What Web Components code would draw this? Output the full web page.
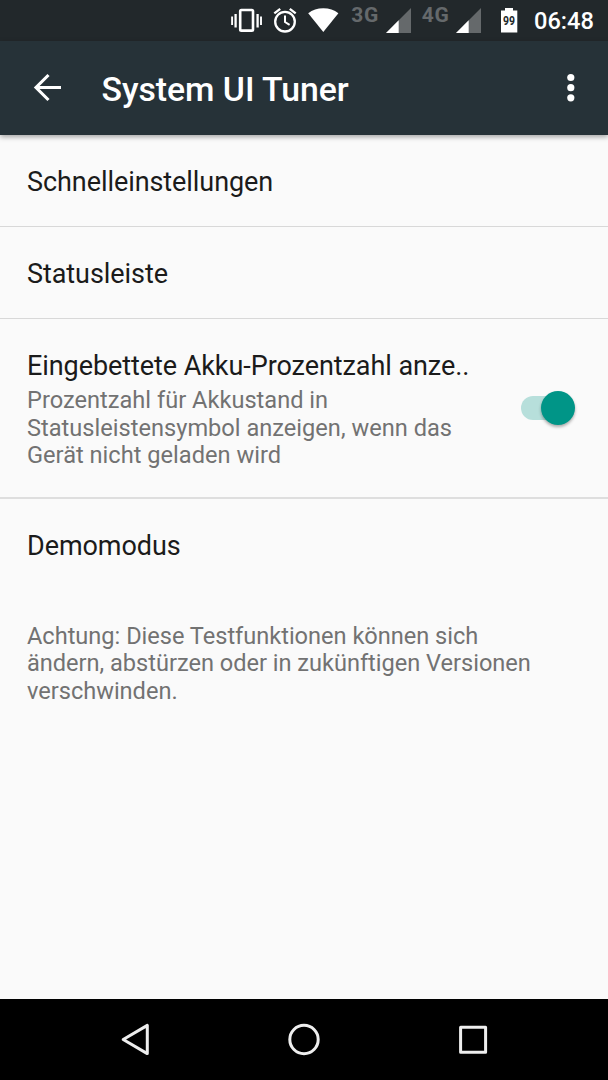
<!DOCTYPE html>
<html lang="de">
<head>
<meta charset="utf-8">
<title>System UI Tuner</title>
<style>
html, body { margin: 0; height: 100%; }
body { font-family: Roboto, "Noto Sans", sans-serif; background: #fafafa; overflow: hidden; }
</style>
</head>
<body>
<tuner-screen></tuner-screen>
<script>
function define(name, html) {
  const template = document.createElement('template');
  template.innerHTML = html;
  customElements.define(name, class extends HTMLElement {
    constructor() {
      super();
      this.attachShadow({ mode: 'open' }).appendChild(template.content.cloneNode(true));
    }
  });
}

define('signal-icon', `
<style>
:host { display: flex; height: 41px; }
span { font-weight: 700; font-size: 21px; line-height: 26px; letter-spacing: .6px; color: #65696b; padding-top: 2px; padding-left: .3px; width: 34.7px; }
svg { display: block; }
</style>
<span><slot></slot></span>
<svg width="26" height="41"><path d="M25 8V33H0Z" fill="#65696b"/><path d="M12.7 20.3V33H0Z" fill="#fff"/></svg>`);

define('status-bar', `
<style>
:host { display: flex; height: 41px; background: #22282b; color: #fff; padding-left: 230px; box-sizing: border-box; }
svg { display: block; flex: none; }
signal-icon { width: 70.5px; flex: none; }
.clock { font-size: 23.6px; font-weight: 500; line-height: 28px; padding-top: 7px; margin-left: 15px; white-space: nowrap; }
</style>
<svg width="121" height="41" fill="none" stroke="#fff">
  <rect x="10.2" y="10" width="12.8" height="20.6" rx="1.2" stroke-width="2.6"/>
  <path d="M5.6 14V27.5M27.6 14V27.5" stroke-width="2.3"/>
  <path d="M2.1 16.5V25M31 16.5V25" stroke-width="1.9"/>
  <circle cx="55" cy="21.7" r="9.8" stroke-width="2.3"/>
  <path d="M55 15.5V22L59.6 24.8" stroke-width="2"/>
  <path d="M44.3 13.4L50.2 8.9M65.7 13.4L59.8 8.9" stroke-width="2.4"/>
  <path d="M93.3 32L78.2 13.2Q84.5 8.2 93.3 8.2T108.4 13.2Z" fill="#fff" stroke="none"/>
</svg>
<signal-icon>3G</signal-icon>
<signal-icon>4G</signal-icon>
<svg width="28" height="41" style="margin-left:-1px">
  <path d="M10 10.4H14V8H22V10.4H26.3V32.5H10Z" fill="#fff"/>
  <text x="18.1" y="25" text-anchor="middle" font-size="12.6" font-weight="700" textLength="12" lengthAdjust="spacingAndGlyphs" fill="#22282b">99</text>
</svg>
<span class="clock">06:48</span>`);

define('app-bar', `
<style>
:host { display: flex; height: 94px; background: #263238; color: #fff; position: relative; z-index: 1; box-shadow: 0 2px 5px rgba(0,0,0,.35); }
svg { display: block; flex: none; }
h1 { margin: 0; flex: 1; font-size: 33.8px; font-weight: 500; line-height: 40px; letter-spacing: -.05px; padding-top: 29px; white-space: nowrap; }
</style>
<svg width="101.6" height="94"><path d="M61 46.5H36.5M48.5 34L36 46.5L48.5 59" fill="none" stroke="#fff" stroke-width="3.1"/></svg>
<h1><slot></slot></h1>
<svg width="74" height="94" fill="#fff"><circle cx="36.8" cy="36.5" r="3.6"/><circle cx="36.8" cy="46.7" r="3.6"/><circle cx="36.8" cy="56.8" r="3.6"/></svg>`);

define('toggle-switch', `
<style>
:host { display: block; width: 56px; height: 40px; flex: none; margin-top: -5px; }
svg { display: block; overflow: visible; }
circle { filter: drop-shadow(0 2px 1.5px rgba(0,0,0,.32)); }
</style>
<svg width="56" height="40"><rect x="1" y="8" width="46" height="24" rx="12" fill="#b7dfdb"/><circle cx="38" cy="20" r="17" fill="#009587"/></svg>`);

define('preference-item', `
<style>
:host { display: flex; box-sizing: border-box; align-items: center; padding: 31px 32px 27.4px 27px; border-bottom: 1px solid #d8d8d8; margin-bottom: 1px; }
:host([wide]) { padding-bottom: 27px; border-bottom: 2px solid #dedede; margin-bottom: 0; }
:host([last]) { border-bottom: 0; padding-top: 31.6px; }
.text { flex: 1; min-width: 0; }
.title { font-size: 27px; line-height: 31.6px; letter-spacing: -.07px; color: #1b1b1b; white-space: nowrap; }
.summary { font-size: 23.6px; line-height: 27.6px; letter-spacing: .01px; color: #727272; white-space: nowrap; }
::slotted([slot="summary"]) { display: block; padding-top: 4.6px; }
</style>
<div class="text"><div class="title"><slot></slot></div><div class="summary"><slot name="summary"></slot></div></div>
<slot name="widget"></slot>`);

define('footer-note', `
<style>
:host { display: block; padding: 32px 27px; font-size: 23.6px; line-height: 27.6px; letter-spacing: -.02px; color: #727272; white-space: nowrap; }
</style>
<slot></slot>`);

define('navigation-bar', `
<style>
:host { display: block; height: 81px; background: #000; }
svg { display: block; }
</style>
<svg width="608" height="81" fill="none" stroke="#eee" stroke-width="3" stroke-linejoin="round">
  <path d="M147.3 26.4V54.6L123.2 40.5Z"/>
  <circle cx="304" cy="40.5" r="14.2"/>
  <rect x="460.6" y="28.2" width="25" height="25"/>
</svg>`);

define('tuner-screen', `
<style>
:host { display: flex; flex-direction: column; width: 608px; height: 1080px; }
main { flex: 1; padding-top: 1px; }
</style>
<status-bar></status-bar>
<app-bar>System UI Tuner</app-bar>
<main>
  <preference-item>Schnelleinstellungen</preference-item>
  <preference-item>Statusleiste</preference-item>
  <preference-item wide>Eingebettete Akku-Prozentzahl anze..
    <span slot="summary">Prozentzahl für Akkustand in<br>Statusleistensymbol anzeigen, wenn das<br>Gerät nicht geladen wird</span>
    <toggle-switch slot="widget"></toggle-switch>
  </preference-item>
  <preference-item last>Demomodus</preference-item>
  <footer-note>Achtung: Diese Testfunktionen können sich<br>ändern, abstürzen oder in zukünftigen Versionen<br>verschwinden.</footer-note>
</main>
<navigation-bar></navigation-bar>`);
</script>
</body>
</html>
